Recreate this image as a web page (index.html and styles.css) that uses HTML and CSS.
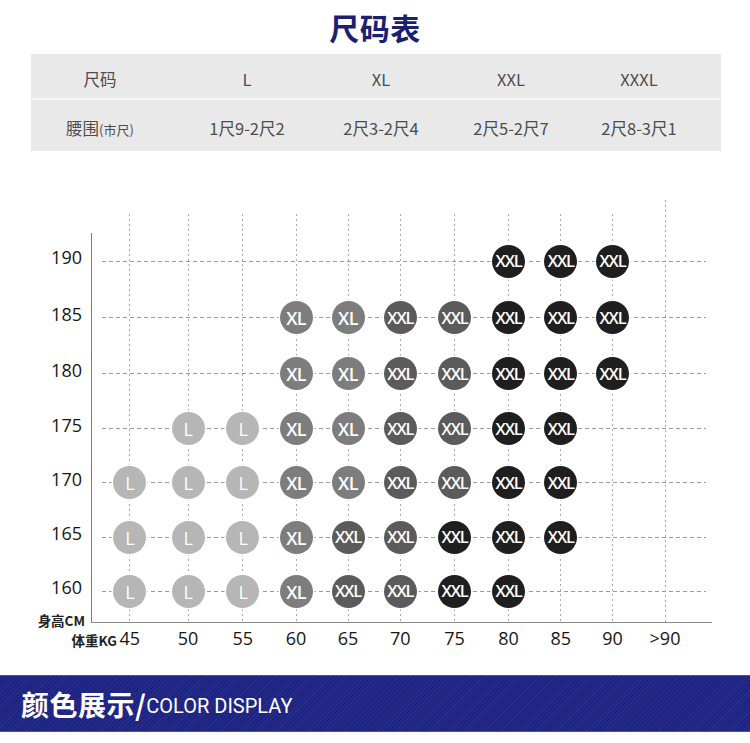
FILE: index.html
```html
<!DOCTYPE html>
<html lang="zh-CN">
<head>
<meta charset="utf-8">
<title>尺码表</title>
<link rel="stylesheet" href="styles.css">
</head>
<body>
<div class="page">
  <h1 class="title">尺码表</h1>

  <div class="size-table">
    <div class="trow head">
      <div class="cell">尺码</div>
      <div class="cell">L</div>
      <div class="cell">XL</div>
      <div class="cell">XXL</div>
      <div class="cell">XXXL</div>
    </div>
    <div class="trow body">
      <div class="cell">腰围<small>(市尺)</small></div>
      <div class="cell">1尺9-2尺2</div>
      <div class="cell">2尺3-2尺4</div>
      <div class="cell">2尺5-2尺7</div>
      <div class="cell">2尺8-3尺1</div>
    </div>
  </div>

  <div class="chart">
    <div class="ylabels">
      <span>190</span><span>185</span><span>180</span><span>175</span><span>170</span><span>165</span><span>160</span>
    </div>

    <div class="plot">
      <i class="hline r1"></i><i class="hline r2"></i><i class="hline r3"></i><i class="hline r4"></i>
      <i class="hline r5"></i><i class="hline r6"></i><i class="hline r7"></i>
      <i class="vline c1"></i><i class="vline c2"></i><i class="vline c3"></i><i class="vline c4"></i>
      <i class="vline c5"></i><i class="vline c6"></i><i class="vline c7"></i><i class="vline c8"></i>
      <i class="vline c9"></i><i class="vline c10"></i><i class="vline c11 tall"></i>

      <b class="dot k r1 c8">XXL</b><b class="dot k r1 c9">XXL</b><b class="dot k r1 c10">XXL</b>

      <b class="dot xl r2 c4">XL</b><b class="dot xl r2 c5">XL</b><b class="dot g r2 c6">XXL</b><b class="dot g r2 c7">XXL</b>
      <b class="dot k r2 c8">XXL</b><b class="dot k r2 c9">XXL</b><b class="dot k r2 c10">XXL</b>

      <b class="dot xl r3 c4">XL</b><b class="dot xl r3 c5">XL</b><b class="dot g r3 c6">XXL</b><b class="dot g r3 c7">XXL</b>
      <b class="dot k r3 c8">XXL</b><b class="dot k r3 c9">XXL</b><b class="dot k r3 c10">XXL</b>

      <b class="dot l r4 c2">L</b><b class="dot l r4 c3">L</b><b class="dot xl r4 c4">XL</b><b class="dot xl r4 c5">XL</b>
      <b class="dot g r4 c6">XXL</b><b class="dot g r4 c7">XXL</b><b class="dot k r4 c8">XXL</b><b class="dot k r4 c9">XXL</b>

      <b class="dot l r5 c1">L</b><b class="dot l r5 c2">L</b><b class="dot l r5 c3">L</b><b class="dot xl r5 c4">XL</b>
      <b class="dot xl r5 c5">XL</b><b class="dot g r5 c6">XXL</b><b class="dot g r5 c7">XXL</b><b class="dot k r5 c8">XXL</b>
      <b class="dot k r5 c9">XXL</b>

      <b class="dot l r6 c1">L</b><b class="dot l r6 c2">L</b><b class="dot l r6 c3">L</b><b class="dot xl r6 c4">XL</b>
      <b class="dot g r6 c5">XXL</b><b class="dot g r6 c6">XXL</b><b class="dot k r6 c7">XXL</b><b class="dot k r6 c8">XXL</b>
      <b class="dot k r6 c9">XXL</b>

      <b class="dot l r7 c1">L</b><b class="dot l r7 c2">L</b><b class="dot l r7 c3">L</b><b class="dot xl r7 c4">XL</b>
      <b class="dot g r7 c5">XXL</b><b class="dot g r7 c6">XXL</b><b class="dot k r7 c7">XXL</b><b class="dot k r7 c8">XXL</b>
    </div>

    <div class="axis-names">
      <span class="yname">身高CM</span>
      <span class="xname">体重KG</span>
    </div>

    <div class="xlabels">
      <span>45</span><span>50</span><span>55</span><span>60</span><span>65</span><span>70</span>
      <span>75</span><span>80</span><span>85</span><span>90</span><span>&gt;90</span>
    </div>
  </div>

  <div class="banner">
    <span class="cn">颜色展示/</span><span class="en">COLOR DISPLAY</span>
  </div>
</div>
</body>
</html>
```

FILE: styles.css
```css
* { box-sizing: border-box; }

html, body {
  margin: 0;
  padding: 0;
  background: #ffffff;
}

.page {
  width: 750px;
  font-family: "Noto Sans CJK SC", "Noto Sans", sans-serif;
}

/* ---------- title ---------- */
.title {
  margin: 0;
  padding-top: 7px;
  height: 47px;
  line-height: 40px;
  text-align: center;
  font-size: 30px;
  font-weight: 700;
  color: #1b1f6e;
  letter-spacing: 0.5px;
}

/* ---------- size table ---------- */
.size-table {
  margin: 7px 29px 0 31px;
  width: 690px;
  background: #e9e9e9;
}

.trow {
  display: grid;
  grid-template-columns: 138px 156px 112px 148px 108px 1fr;
  align-items: center;
  color: #4d4d4d;
  font-size: 16.5px;
  font-weight: 400;
}

.trow.head {
  height: 46px;
  border-bottom: 2px solid #f7f7f7;
  padding-top: 5px;
}

.trow.body {
  height: 51px;
  padding-top: 4px;
}

.cell {
  text-align: center;
  white-space: nowrap;
}

.cell small {
  font-size: 13px;
}

/* ---------- chart ---------- */
.chart {
  margin-top: 81.5px;
  display: grid;
  grid-template-columns: 91px 621px;
  grid-template-rows: auto 30px;
}

.ylabels {
  display: grid;
  grid-template-rows: 57px 56.5px 55.5px 54px 54.25px 54.5px 53.5px;
  align-items: center;
  justify-items: end;
  padding-right: 9px;
  font-family: "Open Sans", "Noto Sans", sans-serif;
  font-size: 18px;
  font-weight: 500;
  color: #161616;
}

.ylabels span {
  padding-bottom: 8px;
  line-height: 24px;
}

.plot {
  display: grid;
  grid-template-columns: 60.5px 56px 53.75px 52.75px 51px 53.75px 54.75px 53.25px 51.25px 52px 53px;
  grid-template-rows: 57px 56.5px 55.5px 54px 54.25px 54.5px 53.5px;
  padding: 0 20.5px 4.25px 7.5px;
  border-left: 1px solid #7a7a7a;
  border-bottom: 1px solid #8a8a8a;
}

.r1 { grid-row: 1; }
.r2 { grid-row: 2; }
.r3 { grid-row: 3; }
.r4 { grid-row: 4; }
.r5 { grid-row: 5; }
.r6 { grid-row: 6; }
.r7 { grid-row: 7; }

.c1 { grid-column: 1; }
.c2 { grid-column: 2; }
.c3 { grid-column: 3; }
.c4 { grid-column: 4; }
.c5 { grid-column: 5; }
.c6 { grid-column: 6; }
.c7 { grid-column: 7; }
.c8 { grid-column: 8; }
.c9 { grid-column: 9; }
.c10 { grid-column: 10; }
.c11 { grid-column: 11; }

.hline {
  grid-column: 1 / -1;
  align-self: center;
  height: 1px;
  margin-left: 2.5px;
  margin-right: -14.5px;
  background: repeating-linear-gradient(to right, #9a9a9a 0 4px, transparent 4px 7px);
}

.vline {
  grid-row: 1 / -1;
  justify-self: center;
  width: 1px;
  margin-top: -19px;
  margin-bottom: -4.25px;
  background: repeating-linear-gradient(to bottom, #a8a8a8 0 2px, transparent 2px 5px);
}

.vline.tall {
  margin-top: -32.5px;
}

.dot {
  align-self: center;
  justify-self: center;
  width: 33px;
  height: 33px;
  border-radius: 50%;
  display: flex;
  align-items: center;
  justify-content: center;
  color: #ffffff;
  font-family: "Open Sans", "Noto Sans", sans-serif;
  font-size: 18px;
  font-weight: 600;
  letter-spacing: -0.6px;
  line-height: 1;
  padding-top: 1px;
  box-shadow: 0 0 0 1.5px #ffffff;
}

.dot.g, .dot.k {
  font-size: 16.5px;
  letter-spacing: -1.1px;
}

.dot.l  { background: #b6b6b6; font-weight: 500; }
.dot.xl { background: #7d7d7d; }
.dot.g  { background: #5b5b5b; }
.dot.k  { background: #1f1f1f; }

.axis-names {
  display: flex;
  flex-direction: column;
  align-items: flex-end;
  font-size: 13.5px;
  font-weight: 700;
  color: #222222;
  line-height: 16px;
}

.yname {
  margin-top: -11px;
  margin-right: 6px;
}

.xname {
  margin-top: 4px;
  margin-right: -26px;
}

.xlabels {
  display: grid;
  grid-template-columns: 60.5px 56px 53.75px 52.75px 51px 53.75px 54.75px 53.25px 51.25px 52px 53px;
  padding-left: 8.5px;
  justify-items: center;
  font-family: "Open Sans", "Noto Sans", sans-serif;
  font-size: 18px;
  font-weight: 500;
  color: #161616;
  line-height: 30px;
}

/* ---------- banner ---------- */
.banner {
  margin-top: 22px;
  height: 57px;
  display: flex;
  align-items: center;
  padding-left: 21px;
  color: #ffffff;
  background-color: #1d2382;
  background-image: repeating-linear-gradient(135deg, rgba(255,255,255,0.05) 0 1px, transparent 1px 3px);
  border-top: 1px solid #4a509c;
  border-bottom: 1px solid #4a509c;
}

.banner .cn {
  font-family: "Noto Sans CJK SC", sans-serif;
  font-size: 28px;
  font-weight: 700;
  letter-spacing: 0.5px;
}

.banner .en {
  font-family: Roboto, "Open Sans", sans-serif;
  font-size: 20px;
  font-weight: 400;
  padding-top: 4px;
}
```
